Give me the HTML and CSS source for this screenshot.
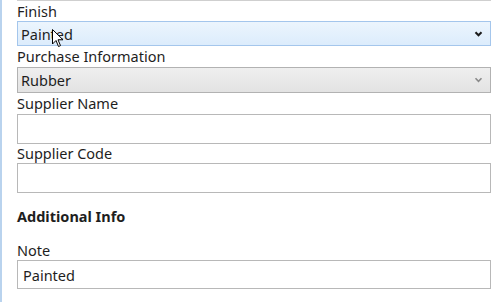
FILE: index.html
```html
<!DOCTYPE html>
<html lang="en">
<head>
  <meta charset="UTF-8" />
  <title>Details</title>
  <link rel="stylesheet" href="styles.css">
</head>
<body>

<div class="panel">
  <div class="form">
    <!-- ujung field sebelumnya -->
    <div class="prev-edge"></div>

    <label class="field-label">Finish</label>
    <div class="select hover">
      <span>Painted</span>
      <svg class="chevron" width="9" height="6" viewBox="0 0 9 6"><path d="M1.5 1.2 L4.5 4.3 L7.5 1.2" fill="none" stroke="#1b1b1b" stroke-width="2"/></svg>
      <svg class="cursor" width="12" height="19" viewBox="0 0 12 19"><path d="M0.5 0.5 L0.5 15 L4 11.5 L6.5 17.5 L8.5 16.6 L6 10.8 L11 10.8 Z" fill="#fff" stroke="#000" stroke-width="1"/></svg>
    </div>

    <label class="field-label tall">Purchase Information</label>
    <div class="select disabled">
      <span>Rubber</span>
      <svg class="chevron" width="9" height="6" viewBox="0 0 9 6"><path d="M1.5 1.2 L4.5 4.3 L7.5 1.2" fill="none" stroke="#8a8a8a" stroke-width="1.6"/></svg>
    </div>

    <label class="field-label tall">Supplier Name</label>
    <input class="text-input" type="text">

    <label class="field-label short">Supplier Code</label>
    <input class="text-input" type="text">

    <h3 class="section-title">Additional Info</h3>

    <label class="field-label">Note</label>
    <input class="text-input note" type="text" value="Painted">
  </div>
</div>

</body>
</html>
```

FILE: styles.css
```css
body {
  margin: 0;
  font-family: "Noto Sans", "Open Sans", sans-serif;
  color: #1e1e1e;
  background: #fff;
}
.panel {
  height: 302px;
  border-left: 2px solid #b9d3ee;
  box-sizing: border-box;
  overflow: hidden;
}
.form {
  width: 474px;
  margin-left: 15px;
}
.prev-edge {
  border-top: 1px solid #cfcfcf;
}
.field-label {
  display: block;
  font-size: 14.5px;
  line-height: 20px;
}
.field-label.tall {
  line-height: 21px;
}
.field-label.short {
  line-height: 19px;
}
.select {
  position: relative;
  display: flex;
  align-items: center;
  justify-content: space-between;
  height: 25px;
  padding: 0 7px 0 3px;
  box-sizing: border-box;
  font-size: 14.5px;
}
.select.hover {
  background: linear-gradient(#ecf5fd, #dcecfc);
  border: 1px solid #a4c6ec;
}
.select.disabled {
  height: 26px;
  background: linear-gradient(#efefef, #e3e3e3);
  border: 1px solid #b2b2b2;
}
.cursor {
  position: absolute;
  left: 34px;
  top: 7px;
}
.text-input {
  display: block;
  width: 100%;
  height: 30px;
  margin: 0;
  border: 1px solid #b8b8b8;
  box-sizing: border-box;
  font-family: inherit;
  font-size: 14.5px;
  color: #1e1e1e;
  padding: 0 5px;
}
.section-title {
  margin: 13px 0 14px;
  font-size: 14.5px;
  font-weight: bold;
  line-height: 20px;
}
.text-input.note {
  height: 29px;
}
```
